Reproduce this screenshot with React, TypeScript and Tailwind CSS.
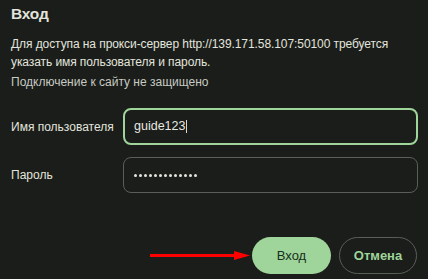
import React from "react";

export default function App() {
  const dots = Array.from({ length: 13 });
  return (
    <div
      className="w-[428px] h-[279px] bg-[#1a1d19] text-[#e3e4de] relative overflow-hidden"
      style={{ fontFamily: '"Liberation Sans", "Noto Sans", sans-serif' }}
    >
      <div className="pl-[11px] pr-[10px] pt-[3px]">
        <div className="text-[15.5px] font-bold leading-[22px] tracking-[-0.2px] text-[#e3e4de]">Вход</div>
        <div className="mt-[10px] text-[12px] leading-[18px] whitespace-nowrap tracking-[-0.08px]">
          Для доступа на прокси-сервер http://139.171.58.107:50100 требуется
          <br />
          указать имя пользователя и пароль.
        </div>
        <div className="text-[12px] leading-[18px] mt-[2px] text-[#c8cac3]">Подключение к сайту не защищено</div>

        <div className="mt-[17px] flex items-center">
          <div className="w-[112px] text-[12px] whitespace-nowrap">Имя пользователя</div>
          <div className="flex-1 h-[37px] rounded-[8px] border-2 border-[#9fd49a] flex items-center pl-[9px] text-[12.5px] text-[#e8e9e3]">
            guide123<span className="inline-block w-px h-[13px] bg-[#d8d9d3] ml-px" />
          </div>
        </div>
        <div className="mt-[12px] flex items-center">
          <div className="w-[112px] text-[12px] whitespace-nowrap">Пароль</div>
          <div className="flex-1 h-[36px] rounded-[8px] border border-[#5a5e59] flex items-center pl-[10px] gap-[2px]">
            {dots.map((_, i) => (
              <span key={i} className="block w-[3px] h-[3px] rounded-full bg-[#e3e4de]" />
            ))}
          </div>
        </div>

        <div className="mt-[44px] flex justify-end items-center pr-px">
          <div className="flex items-center mr-[2px]">
            <div className="w-[84px] h-[3px] bg-[#ff0000]" />
            <svg width="16" height="9" viewBox="0 0 16 9" className="block">
              <polygon points="0,0 16,4.5 0,9" fill="#ff0000" />
            </svg>
          </div>
          <div className="w-[79px] h-[37px] rounded-full bg-[#9fd49a] flex items-center justify-center text-[13px] text-[#16301a]">
            Вход
          </div>
          <div className="ml-[8px] w-[78px] h-[37px] rounded-full border border-[#5a5e59] flex items-center justify-center text-[13px] font-bold text-[#9fd49a]">
            Отмена
          </div>
        </div>
      </div>
    </div>
  );
}
